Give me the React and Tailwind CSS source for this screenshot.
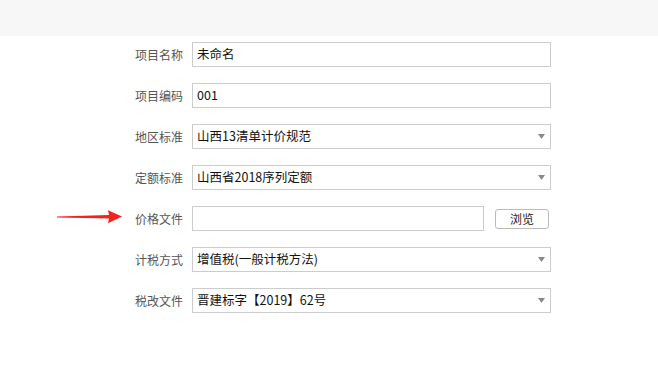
import React from 'react';

const font = { fontFamily: '"Noto Sans CJK SC", "Microsoft YaHei", sans-serif' };

const rows = [
  { label: '项目名称', value: '未命名', type: 'input' },
  { label: '项目编码', value: '001', type: 'input' },
  { label: '地区标准', value: '山西13清单计价规范', type: 'select' },
  { label: '定额标准', value: '山西省2018序列定额', type: 'select' },
  { label: '价格文件', value: '', type: 'file' },
  { label: '计税方式', value: '增值税(一般计税方法)', type: 'select' },
  { label: '税改文件', value: '晋建标字【2019】62号', type: 'select' },
];

const Caret = () => (
  <svg width="7" height="5" viewBox="0 0 7 5" className="shrink-0">
    <path d="M0 0H7L3.5 5Z" fill="#8a8a8a" />
  </svg>
);

// red pointer arrow drawn over the page, aimed at the price-file row
const Arrow = () => (
  <svg width="66" height="14" viewBox="0 0 66 14" className="absolute left-[57px] top-[210px]">
    <path d="M0 6.6L52 5.1L51 0.3L65 6.5L51 13.2L52 8.4L0 7.4Z" fill="#f5221b" />
  </svg>
);

const Row = ({ label, value, type }) => (
  <div className="flex items-center h-[25px]">
    <div className="w-[61px] text-right text-[12px] text-[#555]">{label}</div>
    {type === 'file' ? (
      <div className="ml-[9px] flex items-center">
        <div className="w-[292px] h-[25px] border border-[#ccc] bg-white" />
        <button className="ml-[11px] w-[54px] h-[20px] border border-[#bbb] rounded-[3px] bg-white text-[12px] text-[#222] leading-none">
          浏览
        </button>
      </div>
    ) : (
      <div className="ml-[9px] w-[359px] h-[25px] border border-[#ccc] bg-white flex items-center pl-[4px] pr-[4px]">
        <span className="flex-1 text-[12.5px] text-[#111] leading-none">{value}</span>
        {type === 'select' && (
          <div className="mr-[1px]">
            <Caret />
          </div>
        )}
      </div>
    )}
  </div>
);

export default function App() {
  return (
    <div className="relative w-[658px] h-[379px] bg-white overflow-hidden" style={font}>
      <div className="h-[36px] bg-[#f7f7f7]" />
      <div className="pl-[122px] pt-[6px] flex flex-col gap-[16px]">
        {rows.map((r) => (
          <Row key={r.label} {...r} />
        ))}
      </div>
      <Arrow />
    </div>
  );
}
